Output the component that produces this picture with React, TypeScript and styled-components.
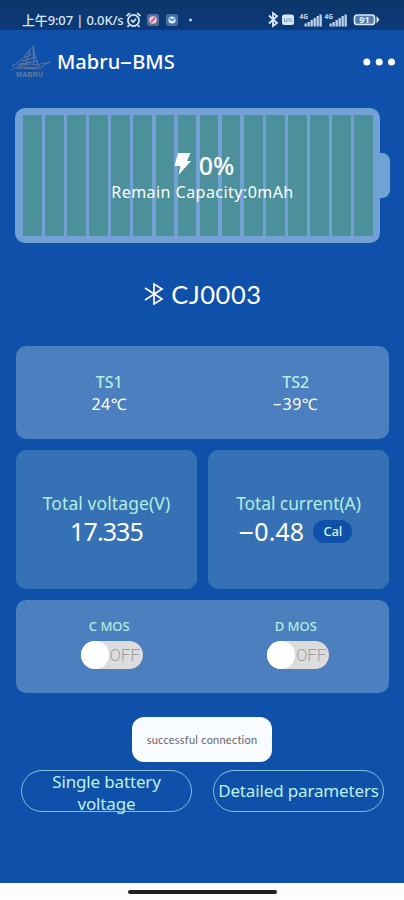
import React from "react";
import styled, { createGlobalStyle } from "styled-components";

const GlobalStyle = createGlobalStyle`
  * { box-sizing: border-box; }
  body { margin: 0; background: #0f50aa; }
`;

const Screen = styled.main`
  width: 404px;
  height: 900px;
  display: flex;
  flex-direction: column;
  overflow: hidden;
  background: #0f50aa;
  color: #fff;
  font-family: "Noto Sans", "Noto Sans CJK SC", sans-serif;
  white-space: nowrap;
`;

const StatusBar = styled.header`
  flex: none;
  height: 30px;
  padding: 9px 22px 0;
  display: flex;
  justify-content: space-between;
  background: linear-gradient(#0b376b, #0c3a78);
  color: #dbe8fa;
`;

const StatusLeft = styled.div`
  display: flex;
  height: 22px;
  align-items: center;
`;

const Clock = styled.span`
  width: 103px;
  font-size: 13px;
  font-weight: 500;
  line-height: 22px;
  letter-spacing: -0.15px;
`;

const StatusIcon = styled.svg<{ $gap?: number }>`
  display: block;
  flex: none;
  margin-left: ${(p) => p.$gap ?? 0}px;
`;

const TitleBar = styled.div`
  flex: none;
  height: 64px;
  display: flex;
  align-items: center;
  padding: 0 8px 0 10px;
`;

const Title = styled.h1`
  flex: 1;
  margin: 0 0 0 5px;
  font-size: 20px;
  font-weight: 500;
  line-height: 28px;
`;

const WideDash = styled.span<{ $em: number; $stretch?: number }>`
  display: inline-block;
  width: ${(p) => p.$em}em;
  text-align: center;
  transform: translateY(-0.05em) scaleX(${(p) => p.$stretch ?? 1.8});
`;

const Battery = styled.section`
  flex: none;
  height: 135px;
  margin: 14px 14px 0 15px;
  display: flex;
  align-items: center;
`;

const BatteryBody = styled.div`
  width: 365px;
  height: 135px;
  position: relative;
  display: grid;
  grid-template-columns: repeat(16, 1fr);
  gap: 3.5px;
  padding: 7px 7px 7px 8px;
  border-radius: 10px;
  background: #72a1d5;
`;

const Cell = styled.div`
  background: #4c909b;
`;

const BatteryTip = styled.div`
  width: 10px;
  height: 45px;
  border-radius: 0 8px 8px 0;
  background: #72a1d5;
`;

const BatteryLabel = styled.div`
  position: absolute;
  inset: 41px 0 0 10px;
  display: flex;
  flex-direction: column;
  align-items: center;
`;

const Percent = styled.div`
  display: flex;
  align-items: center;
  gap: 8px;
  height: 31px;
  padding-left: 3px;
  font-size: 25px;
  font-weight: 500;
`;

const Remain = styled.div`
  font-size: 16px;
  line-height: 24px;
  letter-spacing: 0.46px;
`;

const Device = styled.div`
  flex: none;
  height: 101px;
  margin-bottom: 2px;
  display: flex;
  align-items: center;
  justify-content: center;
  gap: 7px;
  padding-left: 2px;
  font-family: Lato, sans-serif;
  font-size: 25.5px;
  letter-spacing: 0.55px;
`;

const Cards = styled.div`
  flex: none;
  display: grid;
  grid-template-columns: 1fr 1fr;
  grid-template-rows: 93px 139px 93px;
  gap: 11px;
  margin: 0 15px 0 16px;
`;

const WideCard = styled.section`
  grid-column: span 2;
  display: grid;
  grid-template-columns: 1fr 1fr;
  border-radius: 10px;
  background: #4b7fbf;
`;

const Card = styled.section`
  display: flex;
  flex-direction: column;
  align-items: center;
  padding-top: 40px;
  border-radius: 10px;
  background: #3771b5;
`;

const Reading = styled.div<{ $top: number }>`
  display: flex;
  flex-direction: column;
  align-items: center;
  padding-top: ${(p) => p.$top}px;
`;

const Label = styled.div<{ $size: number; $line: number; $track?: number; $weight?: number }>`
  color: #b0eee2;
  font-size: ${(p) => p.$size}px;
  font-weight: ${(p) => p.$weight ?? 400};
  line-height: ${(p) => p.$line}px;
  letter-spacing: ${(p) => p.$track ?? 0}px;
`;

const Temperature = styled.div`
  font-size: 16px;
  line-height: 22px;
  letter-spacing: 0.5px;
`;

const Value = styled.div<{ $track?: number; $shift?: number }>`
  display: flex;
  align-items: center;
  height: 30px;
  padding-right: ${(p) => p.$shift ?? 0}px;
  font-size: 25px;
  letter-spacing: ${(p) => p.$track ?? -0.9}px;
`;

const CalButton = styled.button`
  width: 39px;
  height: 23px;
  margin-left: 9px;
  padding: 0;
  border: 0;
  border-radius: 12px;
  background: #0f50aa;
  color: #d6f5f5;
  font: 500 13px "Noto Sans", sans-serif;
  letter-spacing: -0.2px;
`;

const Switch = styled.button`
  width: 62px;
  height: 28px;
  margin: 5px 0 0 5px;
  padding: 0 3px 0 0;
  border: 0;
  border-radius: 14px;
  display: flex;
  align-items: center;
  justify-content: space-between;
  background: #dcdcdc;
  color: #a0a0a0;
  font: 300 17px/26px Roboto, sans-serif;
  letter-spacing: -0.1px;
`;

const Knob = styled.span`
  width: 28px;
  height: 28px;
  border-radius: 50%;
  background: #fff;
`;

const Toast = styled.div`
  flex: none;
  align-self: center;
  width: 140px;
  height: 45px;
  margin-top: 24px;
  border-radius: 12px;
  background: #f8fbff;
  color: #666;
  font: 11px/46px Lato, sans-serif;
  letter-spacing: 0.24px;
  text-align: center;
`;

const Actions = styled.div`
  flex: none;
  display: grid;
  grid-template-columns: 171px 171px;
  justify-content: space-between;
  margin: 8px 20px 0 21px;
`;

const Action = styled.button<{ $drop?: number }>`
  height: 42px;
  padding: ${(p) => p.$drop ?? 0}px 0 0;
  border: 1.5px solid #86bddb;
  border-radius: 21px;
  display: flex;
  align-items: center;
  justify-content: center;
  background: transparent;
  color: #bdf0eb;
  font: 17px/22px "Noto Sans", sans-serif;
  letter-spacing: -0.15px;
`;

const NavigationBar = styled.footer`
  flex: none;
  height: 17px;
  margin-top: auto;
  padding-top: 7px;
  background: #fdfdfe;
`;

const HomeHandle = styled.div`
  width: 149px;
  height: 4px;
  margin: 0 auto;
  border-radius: 2px;
  background: #202124;
`;

const Signal = ({ x }: { x: number }) => (
  <g>
    <text x={x - 2} y="7.5" fontSize="6.5" fontWeight="700" fill="#c9dcf4" fontFamily="Noto Sans">4G</text>
    {[3, 4.5, 6.5, 8.5, 10.5, 12].map((h, i) => (
      <rect key={i} x={x + 3 + i * 3} y={15.5 - h} width="2.3" height={h} fill="#bdd3ef" />
    ))}
  </g>
);

export default function App() {
  return (
    <>
      <GlobalStyle />
      <Screen>
        <StatusBar>
          <StatusLeft>
            <Clock>上午9:07 | 0.0K/s</Clock>
            <StatusIcon width="17" height="18" viewBox="0 0 17 18" fill="none" stroke="#dbe8fa" strokeWidth="1.7">
              <circle cx="8.5" cy="9.5" r="5.6" />
              <path d="M1.5 5 5 2.2M15.5 5 12 2.2M4 14.2l-1.5 1.7M13 14.2l1.5 1.7M6 9l2.3 2L11 7.8" />
            </StatusIcon>
            <StatusIcon $gap={5} width="50" height="14" viewBox="0 0 50 14">
              <rect x="0" y="1" width="12" height="12" rx="2.5" fill="#546f9e" />
              <circle cx="6" cy="7" r="3.8" fill="#f5c8d4" />
              <path d="m4 9 4-4" stroke="#dc5b82" strokeWidth="2" />
              <rect x="19" y="1" width="12" height="12" rx="2.5" fill="#456d9f" />
              <circle cx="25" cy="7" r="3.6" fill="#deefff" />
              <path d="m22.5 5.5 3 2 2-2" stroke="#4390d4" strokeWidth="1.6" fill="none" />
              <circle cx="43.5" cy="7" r="1.5" fill="#c5d5ea" />
            </StatusIcon>
          </StatusLeft>
          <StatusIcon width="115" height="20" viewBox="0 0 115 20">
            <path d="m2 6.5 8 7.5-4 3V4l4 3-8 7.5" fill="none" stroke="#d8e8fb" strokeWidth="1.8" />
            <rect x="15" y="5.5" width="12" height="10.5" rx="2.5" fill="#d8e8fb" />
            <path d="M17.5 9v3.5h2.5V9m2 0v3.5m2-3.5v3.5h1.7" stroke="#7c9cc4" fill="none" />
            <g transform="translate(0 2)">
              <Signal x={34.5} />
              <Signal x={59.5} />
            </g>
            <rect x="87.5" y="6" width="20" height="9.5" rx="2.5" fill="#527caf" stroke="#d8e8fb" strokeWidth="1.7" />
            <path d="m109.5 7 3 3.5-3 4" fill="#d8e8fb" />
            <text x="92.3" y="14" fontSize="9" fontWeight="700" fill="#e6f1ff" fontFamily="Noto Sans">91</text>
          </StatusIcon>
        </StatusBar>

        <TitleBar>
          <svg width="42" height="36" viewBox="0 0 42 36" fill="none" stroke="#64799e" strokeWidth="1">
            <path d="M2 22c5-3 9-5 13-10l8-10 2 9 3 10M14 14l11-5M12 17l14-4M9 20l19-3M7 21c8 0 13-2 19 0l14-3c-5 2-8 6-12 7L7 24c-3-1-4 1-6 2M20 6l-4 14M23 4l1 17M7 24c4-5 13 3 23-2" />
            <text x="6" y="33" fontSize="8" fontWeight="700" fill="#64799e" stroke="none" fontFamily="Liberation Sans" textLength="27" lengthAdjust="spacingAndGlyphs">MABRU</text>
          </svg>
          <Title>Mabru<WideDash $em={0.6} $stretch={2}>-</WideDash>BMS</Title>
          <svg width="36" height="10" viewBox="0 0 36 10" fill="#fff">
            <circle cx="6.8" cy="5" r="3.5" />
            <circle cx="19.2" cy="5" r="3.5" />
            <circle cx="31.5" cy="5" r="3.5" />
          </svg>
        </TitleBar>

        <Battery>
          <BatteryBody>
            {Array.from({ length: 16 }, (_, i) => <Cell key={i} />)}
            <BatteryLabel>
              <Percent>
                <svg width="17" height="23" viewBox="0 0 17 23" fill="#fff">
                  <path d="M4 0h12.5l-3.5 8h4L4.5 22l1.8-9H.5z" />
                </svg>
                0%
              </Percent>
              <Remain>Remain Capacity:0mAh</Remain>
            </BatteryLabel>
          </BatteryBody>
          <BatteryTip />
        </Battery>

        <Device>
          <svg width="20" height="24" viewBox="0 0 20 24" fill="none" stroke="#fff" strokeWidth="1.7">
            <path d="m1 6 17 11-8 5V2l8 5L1 18" />
          </svg>
          CJ0003
        </Device>

        <Cards>
          <WideCard>
            <Reading $top={25}>
              <Label $size={16} $line={22} $weight={500}>TS1</Label>
              <Temperature>24℃</Temperature>
            </Reading>
            <Reading $top={25}>
              <Label $size={16} $line={22} $weight={500}>TS2</Label>
              <Temperature><WideDash $em={0.58}>-</WideDash>39℃</Temperature>
            </Reading>
          </WideCard>
          <Card>
            <Label $size={17.5} $line={26} $track={0.1}>Total voltage(V)</Label>
            <Value>17.335</Value>
          </Card>
          <Card>
            <Label $size={17.5} $line={26} $track={-0.1}>Total current(A)</Label>
            <Value $track={0.1} $shift={7}>
              <WideDash $em={0.66} $stretch={2.1}>-</WideDash>0.48
              <CalButton>Cal</CalButton>
            </Value>
          </Card>
          <WideCard>
            {["C MOS", "D MOS"].map((name) => (
              <Reading key={name} $top={16}>
                <Label $size={13} $line={20} $weight={500}>{name}</Label>
                <Switch role="switch" aria-checked={false}>
                  <Knob />
                  OFF
                </Switch>
              </Reading>
            ))}
          </WideCard>
        </Cards>

        <Toast>successful connection</Toast>
        <Actions>
          <Action $drop={3}>Single battery<br />voltage</Action>
          <Action>Detailed parameters</Action>
        </Actions>
        <NavigationBar>
          <HomeHandle />
        </NavigationBar>
      </Screen>
    </>
  );
}
